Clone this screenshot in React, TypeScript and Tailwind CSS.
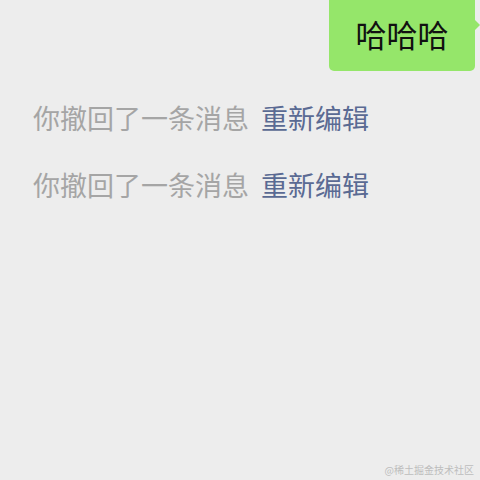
import React from "react";

const font = { fontFamily: '"Noto Sans CJK SC", "Noto Sans", sans-serif' };

function Recall() {
  return (
    <div className="flex items-center h-[40px] text-[27px] leading-[40px] whitespace-nowrap">
      <span className="text-[#a5a5a5]">你撤回了一条消息</span>
      <span className="ml-[12px] text-[#5a6a93]">重新编辑</span>
    </div>
  );
}

export default function App() {
  return (
    <div
      className="w-[480px] h-[480px] bg-[#ededed] overflow-hidden flex flex-col relative"
      style={font}
    >
      <div className="flex justify-end pr-[5px]">
        <div className="relative -mt-[5px] h-[76px] w-[146px] rounded-[5px] bg-[#95e66a] flex items-center justify-center">
          <span className="text-[31px] leading-none text-[#111]">哈哈哈</span>
          <div className="absolute right-[-5px] top-[24px] w-0 h-0 border-y-[6px] border-y-transparent border-l-[6px] border-l-[#95e66a]" />
        </div>
      </div>
      <div className="flex flex-col pl-[33px] mt-[27px] gap-[27px]">
        <Recall />
        <Recall />
      </div>
      <div className="absolute right-[6px] bottom-[5px] text-[10px] leading-none text-[#bdbdbd]">
        @稀土掘金技术社区
      </div>
    </div>
  );
}
